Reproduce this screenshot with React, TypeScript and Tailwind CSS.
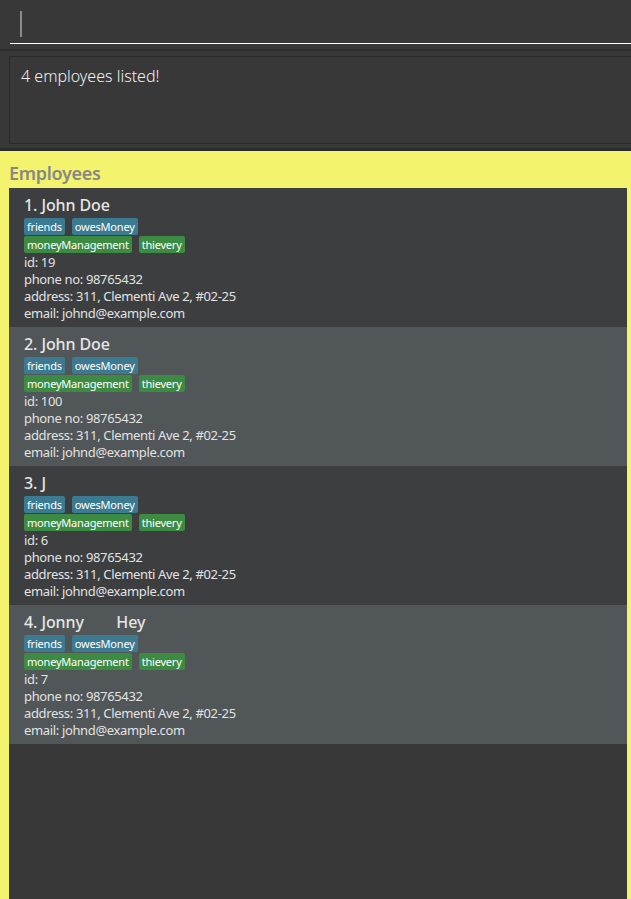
import React from 'react';

type Employee = {
  name: string;
  id: number;
};

const employees: Employee[] = [
  { name: 'John Doe', id: 19 },
  { name: 'John Doe', id: 100 },
  { name: 'J', id: 6 },
  { name: 'Jonny        Hey', id: 7 },
];

const Tag: React.FC<{ label: string; green?: boolean }> = ({ label, green }) => (
  <span
    className={
      green
        ? 'h-[17px] px-[3px] rounded-[2px] bg-[#3d8b42] text-white text-[11px] leading-[17px] tracking-[-0.2px]'
        : 'h-[17px] px-[3px] rounded-[2px] bg-[#3c7a91] text-white text-[11px] leading-[17px] tracking-[-0.2px]'
    }
  >
    {label}
  </span>
);

const EmployeeCard: React.FC<{ emp: Employee; index: number }> = ({ emp, index }) => (
  <div
    className={
      index % 2 === 0
        ? 'bg-[#3c3e40] pl-[15px] pt-[7px] pb-[5px] h-[139px]'
        : 'bg-[#515658] pl-[15px] pt-[7px] pb-[5px] h-[139px]'
    }
  >
    <div className="text-[16px] leading-[21px] font-medium tracking-[-0.1px] text-[#e6e6e6] whitespace-pre">
      {index + 1}. {emp.name}
    </div>
    <div className="flex flex-col gap-[1px] mt-[2px]">
      <div className="flex gap-[7px]">
        <Tag label="friends" />
        <Tag label="owesMoney" />
      </div>
      <div className="flex gap-[7px]">
        <Tag label="moneyManagement" green />
        <Tag label="thievery" green />
      </div>
    </div>
    <div className="mt-[1px] text-[13px] leading-[17px] tracking-[-0.35px] text-[#e2e2e2]">
      <div>id: {emp.id}</div>
      <div>phone no: 98765432</div>
      <div>address: 311, Clementi Ave 2, #02-25</div>
      <div>email: johnd@example.com</div>
    </div>
  </div>
);

const App: React.FC = () => {
  return (
    <div
      className="w-[631px] h-[899px] bg-[#383838] flex flex-col overflow-hidden"
      style={{ fontFamily: '"Noto Sans", "Open Sans", sans-serif' }}
    >
      {/* command box */}
      <div className="h-[49px] pl-[10px] shrink-0">
        <div className="h-[44px] border-b border-white pl-[10px] pt-[11px]">
          <div className="w-[2px] h-[26px] bg-[#8c8c8c]" />
        </div>
      </div>
      <div className="h-[2px] bg-[#2b2b2b] shrink-0" />

      {/* result display */}
      <div className="h-[97px] pt-[5px] pl-[9px] shrink-0">
        <div className="h-[88px] border border-r-0 border-[#2b2b2b] pl-[11px] pt-[7px] text-[16px] font-light text-[#f0f0f0]">
          4 employees listed!
        </div>
      </div>
      <div className="h-[3px] bg-[#2b2b2b] shrink-0" />

      {/* employee list */}
      <div className="flex-1 bg-[#f3f36d] pl-[9px] pr-[4px] flex flex-col">
        <div className="h-[37px] pt-[10px] text-[18px] font-semibold leading-[24px] tracking-[-0.3px] text-[#888888]">
          Employees
        </div>
        <div className="flex-1 bg-[#383838]">
          {employees.map((emp, i) => (
            <EmployeeCard key={i} emp={emp} index={i} />
          ))}
        </div>
      </div>
    </div>
  );
};

export default App;
